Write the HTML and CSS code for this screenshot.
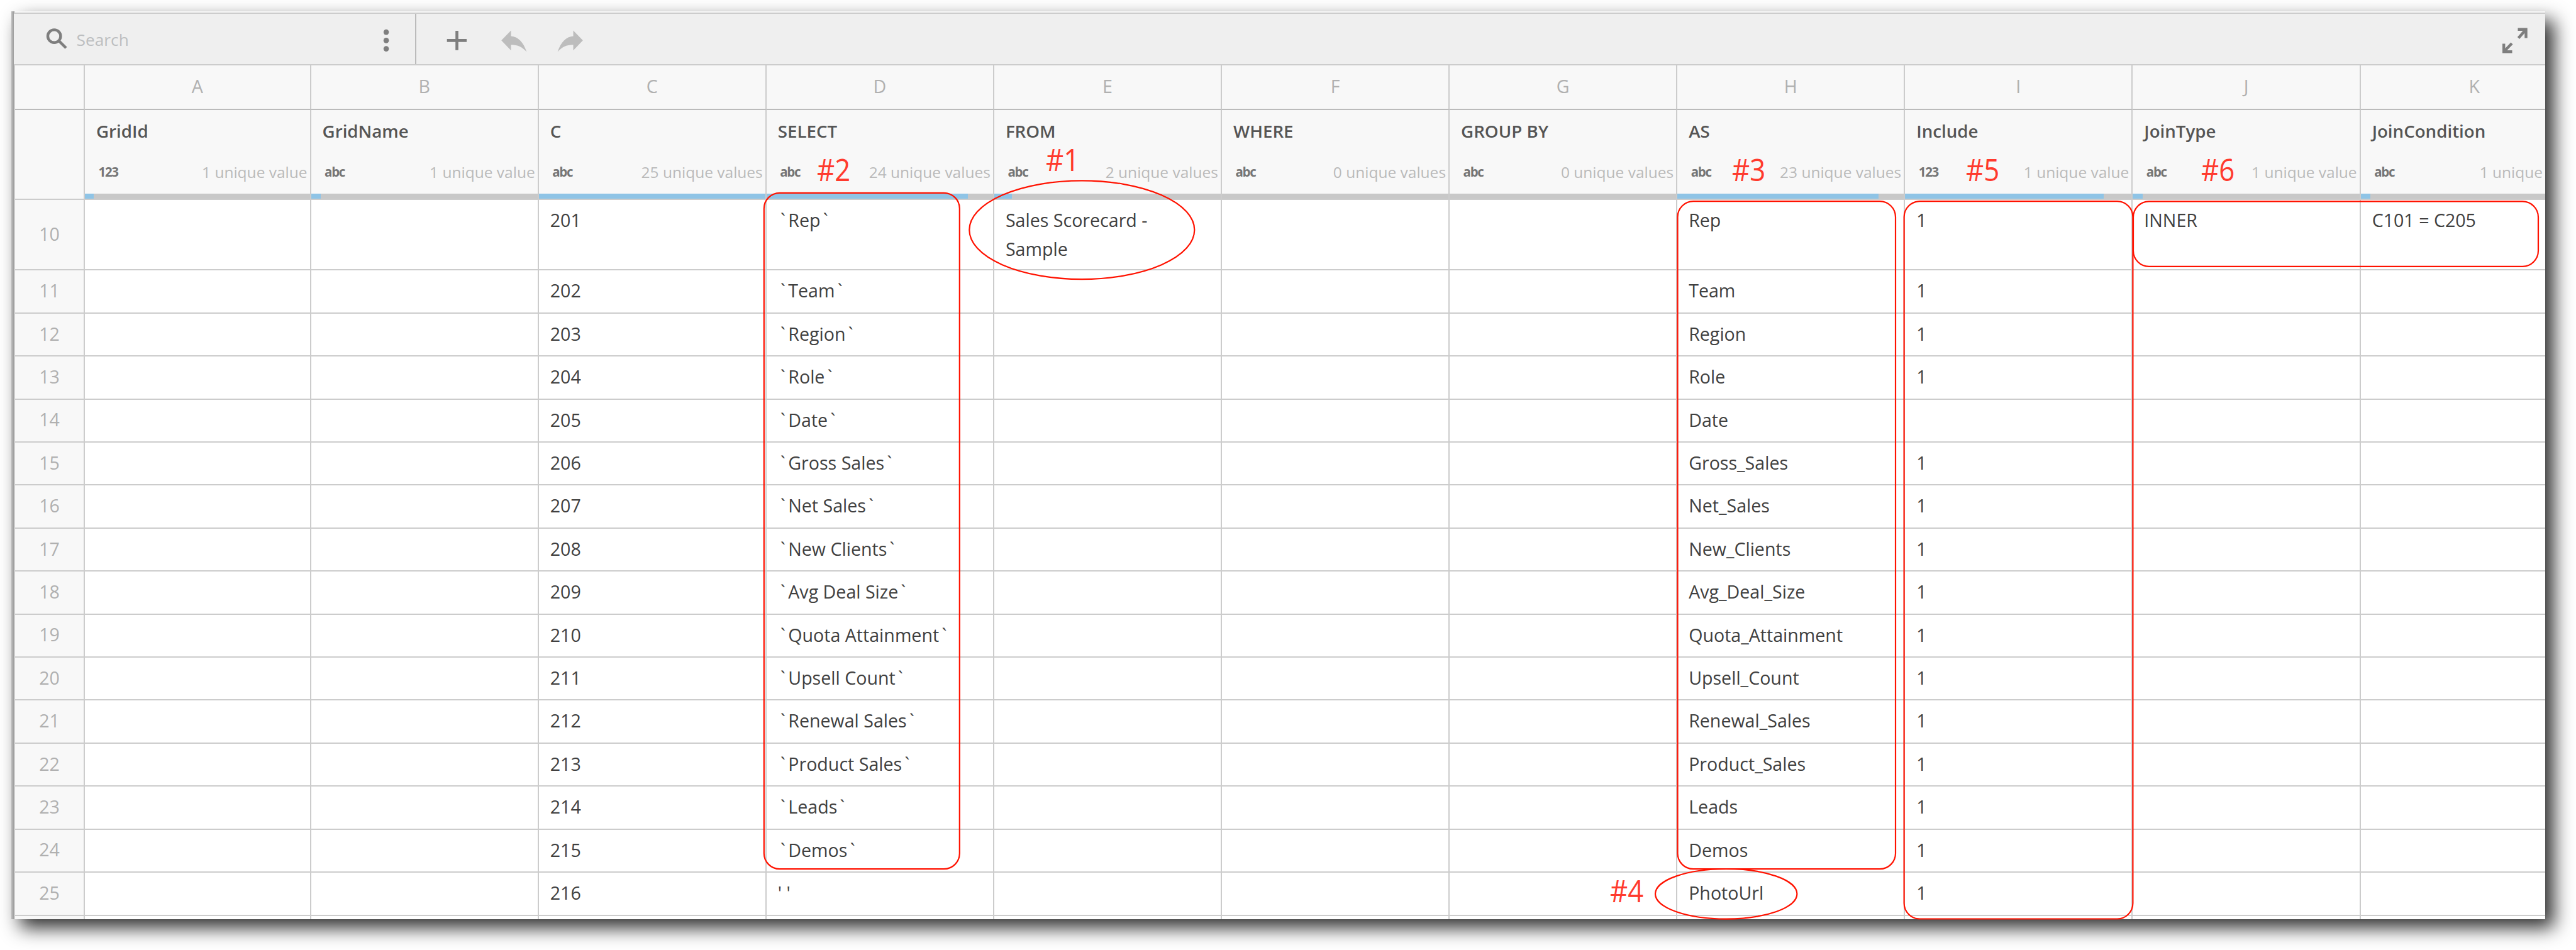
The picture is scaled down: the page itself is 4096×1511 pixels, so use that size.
FILE: index.html
```html
<!DOCTYPE html>
<html lang="en">
<head>
<meta charset="utf-8">
<title>Grid</title>
<link rel="stylesheet" href="styles.css">
</head>
<body>
<main class="window">
  <header class="toolbar">
    <div class="search">
      <svg class="icon-search" viewBox="70 22 40 80"><circle cx="86.2" cy="57.6" r="10.2"/><path d="M94 65.4L105 76.3"/></svg>
      <span class="search-text">Search</span>
      <svg class="icon-dots" viewBox="604 22 20 80"><circle cx="614.1" cy="51.1" r="4.3"/><circle cx="614.1" cy="64.4" r="4.3"/><circle cx="614.1" cy="77.6" r="4.3"/></svg>
    </div>
    <div class="actions">
      <svg class="icon-plus" viewBox="706 22 41 80"><path d="M726.5 49V79.8M710.7 64.4H742"/></svg>
      <svg class="icon-turn" viewBox="797 22 41 80"><path d="M797.2 64.3L812.5 48.5V57.6C824 58.5 832 67 837.4 82.5C830 74.5 824 71.2 812.5 71.2V80.2Z"/></svg>
      <svg class="icon-turn" viewBox="797 22 41 80"><path d="M837.8 64.3L822.5 48.5V57.6C811 58.5 803 67 797.6 82.5C805 74.5 811 71.2 822.5 71.2V80.2Z"/></svg>
    </div>
    <svg class="icon-expand" viewBox="3979 22 40 80"><path d="M4003.5 46.8H4016.5V60.5M4016.5 46.8L4004.5 60.5M3981.2 69.5V82.2H3994.5M3981.2 82.2L3994 69"/></svg>
  </header>

  <div class="row letters"><b></b><b>A</b><b>B</b><b>C</b><b>D</b><b>E</b><b>F</b><b>G</b><b>H</b><b>I</b><b>J</b><b>K</b></div>

  <div class="row heads">
    <section class="corner"></section>
    <section><h2>GridId</h2><p><em>123</em><span>1 unique value</span></p><div class="bar"><i style="width:13.5px"></i></div></section>
    <section><h2>GridName</h2><p><em>abc</em><span>1 unique value</span></p><div class="bar"><i style="width:15px"></i></div></section>
    <section><h2>C</h2><p><em>abc</em><span>25 unique values</span></p><div class="bar"><i style="width:100%"></i></div></section>
    <section><h2>SELECT</h2><p><em>abc</em><span>24 unique values</span></p><div class="bar"><i style="width:320px"></i></div></section>
    <section><h2>FROM</h2><p><em>abc</em><span>2 unique values</span></p><div class="bar"><i style="width:28.4px"></i></div></section>
    <section><h2>WHERE</h2><p><em>abc</em><span>0 unique values</span></p><div class="bar"></div></section>
    <section><h2>GROUP BY</h2><p><em>abc</em><span>0 unique values</span></p><div class="bar"></div></section>
    <section><h2>AS</h2><p><em>abc</em><span>23 unique values</span></p><div class="bar"><i style="width:320px"></i></div></section>
    <section><h2>Include</h2><p><em>123</em><span>1 unique value</span></p><div class="bar"><i style="width:316px"></i></div></section>
    <section><h2>JoinType</h2><p><em>abc</em><span>1 unique value</span></p><div class="bar"><i style="width:15.5px"></i></div></section>
    <section><h2>JoinCondition</h2><p><em>abc</em><span>1 unique</span></p><div class="bar"><i style="width:15px"></i></div></section>
  </div>

  <div class="row first"><b>10</b><b></b><b></b><b>201</b><b><u>`</u>Rep<u>`</u></b><b>Sales Scorecard -<br>Sample</b><b></b><b></b><b>Rep</b><b>1</b><b>INNER</b><b>C101 = C205</b></div>
  <div class="row"><b>11</b><b></b><b></b><b>202</b><b><u>`</u>Team<u>`</u></b><b></b><b></b><b></b><b>Team</b><b>1</b><b></b><b></b></div>
  <div class="row"><b>12</b><b></b><b></b><b>203</b><b><u>`</u>Region<u>`</u></b><b></b><b></b><b></b><b>Region</b><b>1</b><b></b><b></b></div>
  <div class="row"><b>13</b><b></b><b></b><b>204</b><b><u>`</u>Role<u>`</u></b><b></b><b></b><b></b><b>Role</b><b>1</b><b></b><b></b></div>
  <div class="row"><b>14</b><b></b><b></b><b>205</b><b><u>`</u>Date<u>`</u></b><b></b><b></b><b></b><b>Date</b><b></b><b></b><b></b></div>
  <div class="row"><b>15</b><b></b><b></b><b>206</b><b><u>`</u>Gross Sales<u>`</u></b><b></b><b></b><b></b><b>Gross_Sales</b><b>1</b><b></b><b></b></div>
  <div class="row"><b>16</b><b></b><b></b><b>207</b><b><u>`</u>Net Sales<u>`</u></b><b></b><b></b><b></b><b>Net_Sales</b><b>1</b><b></b><b></b></div>
  <div class="row"><b>17</b><b></b><b></b><b>208</b><b><u>`</u>New Clients<u>`</u></b><b></b><b></b><b></b><b>New_Clients</b><b>1</b><b></b><b></b></div>
  <div class="row"><b>18</b><b></b><b></b><b>209</b><b><u>`</u>Avg Deal Size<u>`</u></b><b></b><b></b><b></b><b>Avg_Deal_Size</b><b>1</b><b></b><b></b></div>
  <div class="row"><b>19</b><b></b><b></b><b>210</b><b><u>`</u>Quota Attainment<u>`</u></b><b></b><b></b><b></b><b>Quota_Attainment</b><b>1</b><b></b><b></b></div>
  <div class="row"><b>20</b><b></b><b></b><b>211</b><b><u>`</u>Upsell Count<u>`</u></b><b></b><b></b><b></b><b>Upsell_Count</b><b>1</b><b></b><b></b></div>
  <div class="row"><b>21</b><b></b><b></b><b>212</b><b><u>`</u>Renewal Sales<u>`</u></b><b></b><b></b><b></b><b>Renewal_Sales</b><b>1</b><b></b><b></b></div>
  <div class="row"><b>22</b><b></b><b></b><b>213</b><b><u>`</u>Product Sales<u>`</u></b><b></b><b></b><b></b><b>Product_Sales</b><b>1</b><b></b><b></b></div>
  <div class="row"><b>23</b><b></b><b></b><b>214</b><b><u>`</u>Leads<u>`</u></b><b></b><b></b><b></b><b>Leads</b><b>1</b><b></b><b></b></div>
  <div class="row"><b>24</b><b></b><b></b><b>215</b><b><u>`</u>Demos<u>`</u></b><b></b><b></b><b></b><b>Demos</b><b>1</b><b></b><b></b></div>
  <div class="row last"><b>25</b><b></b><b></b><b>216</b><b>' '</b><b></b><b></b><b></b><b>PhotoUrl</b><b>1</b><b></b><b></b></div>
  <div class="row cut"><b></b><b></b><b></b><b></b><b></b><b></b><b></b><b></b><b></b><b></b><b></b><b></b></div>
</main>

<svg class="marks" viewBox="0 0 4096 1511">
  <rect x="1214.8" y="306.8" width="311" height="1075.4" rx="25"/>
  <rect x="2667.5" y="320.2" width="346.5" height="1062" rx="25"/>
  <rect x="3027.6" y="320.2" width="363.8" height="1141.3" rx="25"/>
  <rect x="3392" y="320.4" width="644" height="103.4" rx="25"/>
  <ellipse cx="1720.3" cy="365.7" rx="179" ry="78.4"/>
  <ellipse cx="2744.7" cy="1421.8" rx="112.7" ry="39.8"/>
</svg>
<span class="tag tag-1">#1</span>
<span class="tag tag-2">#2</span>
<span class="tag tag-3">#3</span>
<span class="tag tag-4">#4</span>
<span class="tag tag-5">#5</span>
<span class="tag tag-6">#6</span>
</body>
</html>
```

FILE: styles.css
```css
* { box-sizing: border-box; }

body {
  margin: 0;
  width: 4096px;
  height: 1511px;
  padding: 18px 0 0 18px;
  overflow: hidden;
  background: #fff;
  font-family: "Open Sans", sans-serif;
  font-size: 28.6px;
  color: #404040;
}

.window {
  width: 4029px;
  height: 1444px;
  padding: 2px 0 0 6px;
  overflow: hidden;
  background: linear-gradient(90deg, #b8b8b8 2px, #a1a1a1 2px, #a1a1a1 4px, #ccc 4px, #ccc 6px, #f7f7f7 6px);
  box-shadow: 14px 14px 28px rgba(0, 0, 0, .81);
}

/* toolbar */
.toolbar {
  display: flex;
  height: 83.9px;
  margin-left: -2px;
  border-top: 2px solid #ccc;
  border-bottom: 2px solid #ccc;
  background: #efefef;
}
.toolbar svg { height: 80px; flex: none; fill: none; }
.search {
  display: flex;
  width: 640px;
  padding: 0 36px 0 48px;
  border-right: 2px solid #bbb;
}
.search-text {
  flex: 1;
  padding: 23px 0 0 11.5px;
  font-size: 26.3px;
  line-height: 36px;
  color: #bcbec0;
}
.icon-search { width: 40px; stroke: #7e7e7e; stroke-width: 4.4; }
.icon-dots { width: 20px; }
.icon-dots circle { fill: #7e7e7e; }
.actions { display: flex; flex: 1; padding-left: 44px; }
.icon-plus { width: 41px; margin-right: 50px; stroke: #7e7e7e; stroke-width: 4.6; }
.icon-turn { width: 41px; margin-right: 48px; }
.icon-turn path { fill: #bdbdbd; }
.icon-expand { width: 40px; margin-right: 28px; stroke: #7e7e7e; stroke-width: 4.4; }

/* grid */
.row {
  display: grid;
  grid-template-columns: 111px 359.6px repeat(8, 362.1px) 362.3px 293.4px;
  height: 68.4px;
}
.row > * {
  border-right: 2px solid #ccc;
  border-bottom: 2px solid #ccc;
  background: #fff;
}
.row > :last-child { border-right: 0; }
.row b {
  padding: 9px 0 0 18px;
  font-weight: 400;
  line-height: 45.9px;
  white-space: nowrap;
}
.row u {
  display: inline-block;
  width: 16.5px;
  text-align: center;
  text-decoration: none;
}
.row b:first-child,
.letters b {
  display: flex;
  align-items: center;
  justify-content: center;
  padding: 0 0 3px;
  background: #f8f8f8;
  color: #b0b0b0;
}
.row.first { height: 112.2px; }
.row.last { height: 69.2px; }
.row.cut { height: 8px; }
.row.cut b { padding: 0; }

.row.letters { height: 71.1px; }
.row.letters b { border-bottom-color: #bbb; padding-bottom: 2px; }
.row.letters b:last-child { padding-left: 68px; }

.heads { height: 143.3px !important; }
.heads section {
  display: flex;
  flex-direction: column;
  background: #f8f8f8;
}
.heads h2 {
  margin: 0;
  padding: 14px 0 0 18px;
  font-size: 27.7px;
  font-weight: 600;
  line-height: 38px;
  color: #555;
}
.heads p {
  display: flex;
  flex: 1;
  align-items: flex-start;
  justify-content: space-between;
  margin: 0;
  padding: 30px 4px 0 21.5px;
}
.heads em {
  padding-top: 2px;
  font-size: 20.5px;
  font-style: normal;
  font-weight: 700;
  line-height: 28px;
  letter-spacing: -1.3px;
  color: #757575;
}
.heads span { padding-top: .5px; font-size: 24.5px; line-height: 33px; color: #bababa; white-space: nowrap; }
.bar { height: 8.5px; background: #c8c8c8; }
.bar i { display: block; height: 100%; background: #8fc4e6; }

/* annotations drawn over the grid */
.marks {
  position: absolute;
  left: 0;
  top: 0;
  width: 4096px;
  height: 1511px;
  fill: none;
  stroke: #ff1200;
  stroke-width: 2.2;
}
.tag {
  position: absolute;
  font-size: 48.6px;
  line-height: 66px;
  color: #ff3a2d;
  transform: scaleX(.9);
  transform-origin: 0 0;
}
.tag-1 { left: 1663px; top: 220px; }
.tag-2 { left: 1298.5px; top: 235.5px; }
.tag-3 { left: 2753.5px; top: 235.5px; }
.tag-4 { left: 2559.5px; top: 1383px; }
.tag-5 { left: 3126px; top: 235.5px; }
.tag-6 { left: 3500px; top: 235.5px; }
```
